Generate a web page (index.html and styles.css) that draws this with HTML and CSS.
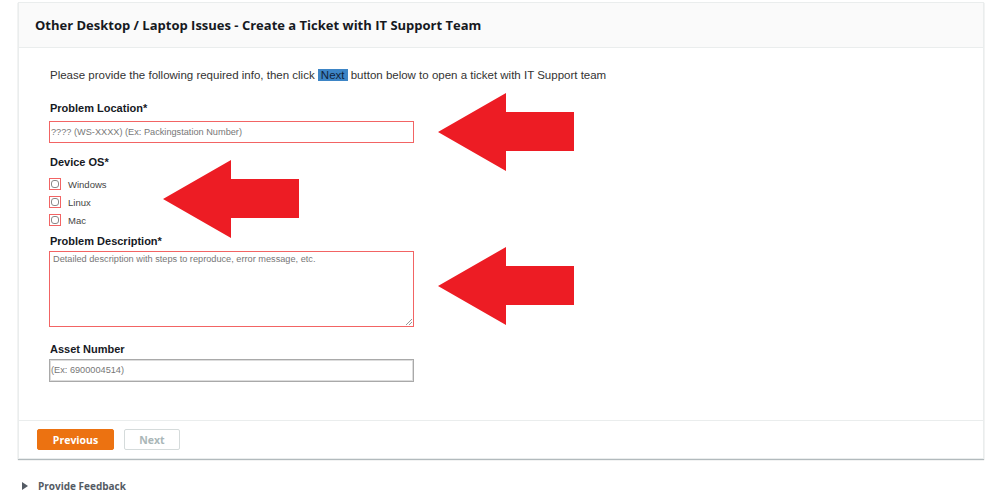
FILE: index.html
```html
<!DOCTYPE html>
<html>
<head>
<meta charset="utf-8">
<link rel="stylesheet" href="styles.css">
</head>
<body>
<div class="page">
  <div class="card">
    <div class="card-header">Other Desktop / Laptop Issues - Create a Ticket with IT Support Team</div>
    <div class="card-body">
      <p class="intro">Please provide the following required info, then click <span class="hl">Next</span> button below to open a ticket with IT Support team</p>

      <div class="label lbl-first">Problem Location<span class="req">*</span></div>
      <div class="input invalid">???? (WS-XXXX) (Ex: Packingstation Number)</div>

      <div class="label lbl-os">Device OS<span class="req">*</span></div>
      <div class="checks">
        <div class="check-row"><span class="cb"><span class="cb-inner"></span></span><span>Windows</span></div>
        <div class="check-row"><span class="cb"><span class="cb-inner"></span></span><span>Linux</span></div>
        <div class="check-row"><span class="cb"><span class="cb-inner"></span></span><span>Mac</span></div>
      </div>

      <div class="label lbl-desc">Problem Description<span class="req">*</span></div>
      <div class="textarea invalid">Detailed description with steps to reproduce, error message, etc.
        <svg class="grip" width="7" height="7" viewBox="0 0 7 7"><path d="M1 7L7 1M4 7L7 4" stroke="#999" stroke-width="1"/></svg>
      </div>

      <div class="label lbl-asset">Asset Number</div>
      <div class="input plain">(Ex: 6900004514)</div>
    </div>
    <div class="card-footer">
      <button class="btn btn-primary">Previous</button>
      <button class="btn btn-disabled">Next</button>
    </div>
  </div>
  <div class="feedback"><span class="tri"></span>Provide Feedback</div>

  <svg class="arrow a1" width="140" height="80" viewBox="0 0 140 80"><polygon points="0,39 68,0 68,19 136,19 136,58 68,58 68,78" fill="#ed1c24"/></svg>
  <svg class="arrow a2" width="140" height="80" viewBox="0 0 140 80"><polygon points="0,39 68,0 68,19 136,19 136,58 68,58 68,78" fill="#ed1c24"/></svg>
  <svg class="arrow a3" width="140" height="80" viewBox="0 0 140 80"><polygon points="0,39 68,0 68,19 136,19 136,58 68,58 68,78" fill="#ed1c24"/></svg>
</div>
</body>
</html>
```

FILE: styles.css
```css
html, body {
  margin: 0;
  padding: 0;
  background: #ffffff;
}
.page {
  position: relative;
  width: 1000px;
  height: 500px;
  padding: 2px 0 0 18px;
  box-sizing: border-box;
  font-family: "Liberation Sans", Arial, sans-serif;
}
.card {
  width: 966px;
  border: 1px solid #eaeded;
  box-sizing: border-box;
  box-shadow: 0 1px 1px 0 rgba(0,28,36,0.3);
  background: #fff;
}
.card-header {
  height: 44px;
  background: #fafafa;
  border-bottom: 1px solid #eaeded;
  padding-left: 16px;
  font-family: "Open Sans", sans-serif;
  font-weight: 700;
  font-size: 13px;
  line-height: 44px;
  color: #16191f;
}
.card-body {
  padding: 20px 30px 38px 30px;
}
.intro {
  margin: 0 0 0 1px;
  font-size: 11.5px;
  line-height: 14px;
  color: #333;
}
.hl {
  background: #3d85c6;
  color: #10233c;
  padding: 0 3px;
}
.label {
  margin-left: 1px;
  font-weight: 700;
  font-size: 11px;
  line-height: 14px;
  color: #16191f;
}
.req { color: #16191f; }
.lbl-first { margin-top: 19px; }
.lbl-os { margin-top: 12px; }
.lbl-desc { margin-top: 5px; }
.lbl-asset { margin-top: 15px; }
.input {
  width: 365px;
  height: 22px;
  box-sizing: border-box;
  margin-top: 6px;
  padding-left: 1px;
  font-size: 9.2px;
  line-height: 20px;
  color: #777;
}
.invalid { border: 1px solid #f26464; }
.plain {
  margin-top: 3px;
  height: 23px;
  border: 1px solid #a9a9a9;
  box-shadow: inset 0 0 0 1px #ddd;
  line-height: 21px;
}
.checks {
  margin-top: 6px;
}
.check-row {
  display: flex;
  align-items: center;
  height: 18px;
  font-size: 9.5px;
  color: #444;
}
.cb {
  width: 10px;
  height: 10px;
  border: 1px solid #f26464;
  display: flex;
  align-items: center;
  justify-content: center;
  margin-right: 7px;
}
.cb-inner {
  width: 8px;
  height: 8px;
  border: 1px solid #888;
  border-radius: 3px;
  box-sizing: border-box;
  background: #fff;
}
.textarea {
  position: relative;
  margin-top: 3px;
  width: 365px;
  height: 76px;
  box-sizing: border-box;
  padding: 1px 3px;
  font-size: 9.2px;
  line-height: 12px;
  color: #777;
}
.grip {
  position: absolute;
  right: 1px;
  bottom: 1px;
}
.card-footer {
  border-top: 1px solid #eaeded;
  padding: 8px 18px 8px 18px;
  display: flex;
  gap: 10px;
}
.btn {
  height: 21px;
  border-radius: 2px;
  font-family: "Open Sans", sans-serif;
  font-weight: 700;
  font-size: 10.5px;
  padding: 0;
  cursor: pointer;
}
.btn-primary {
  width: 77px;
  background: #ec7211;
  border: 1px solid #ec7211;
  color: #fff;
}
.btn-disabled {
  width: 56px;
  background: #fff;
  border: 1px solid #d5dbdb;
  color: #aab7b8;
}
.feedback {
  margin-top: 20px;
  margin-left: 4px;
  display: flex;
  align-items: center;
  font-family: "Open Sans", sans-serif;
  font-weight: 700;
  font-size: 10px;
  color: #545b64;
}
.tri {
  width: 0;
  height: 0;
  border-left: 6px solid #545b64;
  border-top: 4px solid transparent;
  border-bottom: 4px solid transparent;
  margin-right: 10px;
}
.arrow { position: absolute; }
.a1 { left: 438px; top: 93px; }
.a2 { left: 163px; top: 160px; }
.a3 { left: 438px; top: 247px; }
```
